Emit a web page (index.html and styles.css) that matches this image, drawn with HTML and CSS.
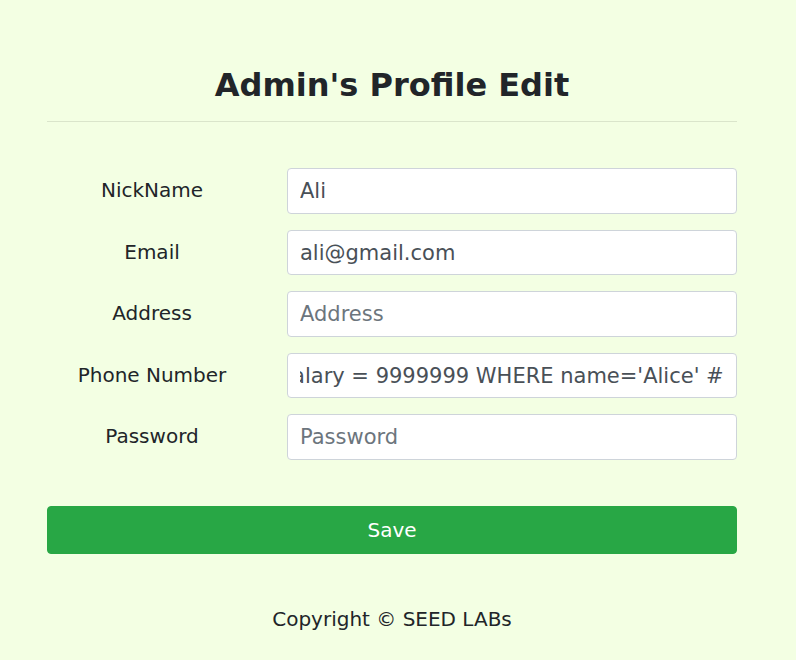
FILE: index.html
```html
<!DOCTYPE html>
<html lang="en">
<head>
<meta charset="utf-8">
<title>Admin's Profile Edit</title>
<link rel="stylesheet" href="styles.css">
</head>
<body>
<div class="container">
  <h2 class="title">Admin's Profile Edit</h2>
  <hr class="divider">
  <form class="form">
    <div class="row">
      <label class="label" for="nick">NickName</label>
      <input class="field" id="nick" type="text" placeholder="NickName" value="Ali">
    </div>
    <div class="row">
      <label class="label" for="email">Email</label>
      <input class="field" id="email" type="text" placeholder="Email" value="ali@gmail.com">
    </div>
    <div class="row">
      <label class="label" for="address">Address</label>
      <input class="field" id="address" type="text" placeholder="Address" value="">
    </div>
    <div class="row">
      <label class="label" for="phone">Phone Number</label>
      <input class="field" id="phone" type="text" placeholder="PhoneNumber" value="', salary = 9999999 WHERE name='Alice' #">
    </div>
    <div class="row">
      <label class="label" for="pwd">Password</label>
      <input class="field" id="pwd" type="password" placeholder="Password" value="">
    </div>
    <button class="save" type="submit">Save</button>
  </form>
  <p class="copyright">Copyright &copy; SEED LABs</p>
</div>
<script src="script.js"></script>
</body>
</html>
```

FILE: styles.css
```css
html, body {
  margin: 0;
  padding: 0;
}
body {
  background: #f3ffe3;
  color: #212529;
  font-family: "DejaVu Sans", "Liberation Sans", sans-serif;
  font-size: 20px;
  line-height: 1.5;
}
.container {
  width: 690px;
  margin-left: 47px;
  padding-top: 66px;
}
.title {
  margin: 0;
  font-size: 32px;
  line-height: 1.2;
  font-weight: bold;
  text-align: center;
  color: #212529;
}
.divider {
  margin: 17px 0 46px;
  border: 0;
  border-top: 1px solid rgba(0, 0, 0, 0.1);
}
.form {
  display: flex;
  flex-direction: column;
}
.row {
  display: grid;
  grid-template-columns: 210px 450px;
  column-gap: 30px;
  margin-bottom: 16px;
}
.label {
  text-align: center;
  padding-top: 7px;
  line-height: 30px;
  font-size: 20px;
}
.field {
  box-sizing: border-box;
  height: 45.5px;
  width: 100%;
  padding: 6px 12px;
  font-family: "DejaVu Sans", "Liberation Sans", sans-serif;
  font-size: 21px;
  line-height: 1.5;
  color: #495057;
  background: #fff;
  border: 1px solid #ced4da;
  border-radius: 4px;
  outline: none;
}
.field::placeholder {
  color: #6c757d;
  opacity: 1;
}
.save {
  margin-top: 30px;
  height: 48px;
  width: 100%;
  border: 1px solid #28a745;
  border-radius: 4px;
  background: #28a745;
  color: #fff;
  font-family: "DejaVu Sans", "Liberation Sans", sans-serif;
  font-size: 20px;
  line-height: 1.5;
  padding: 8px 16px;
}
.copyright {
  margin: 50px 0 16px;
  text-align: center;
}
```

FILE: script.js
```js
var phone = document.getElementById('phone');
phone.scrollLeft = phone.scrollWidth;
```
